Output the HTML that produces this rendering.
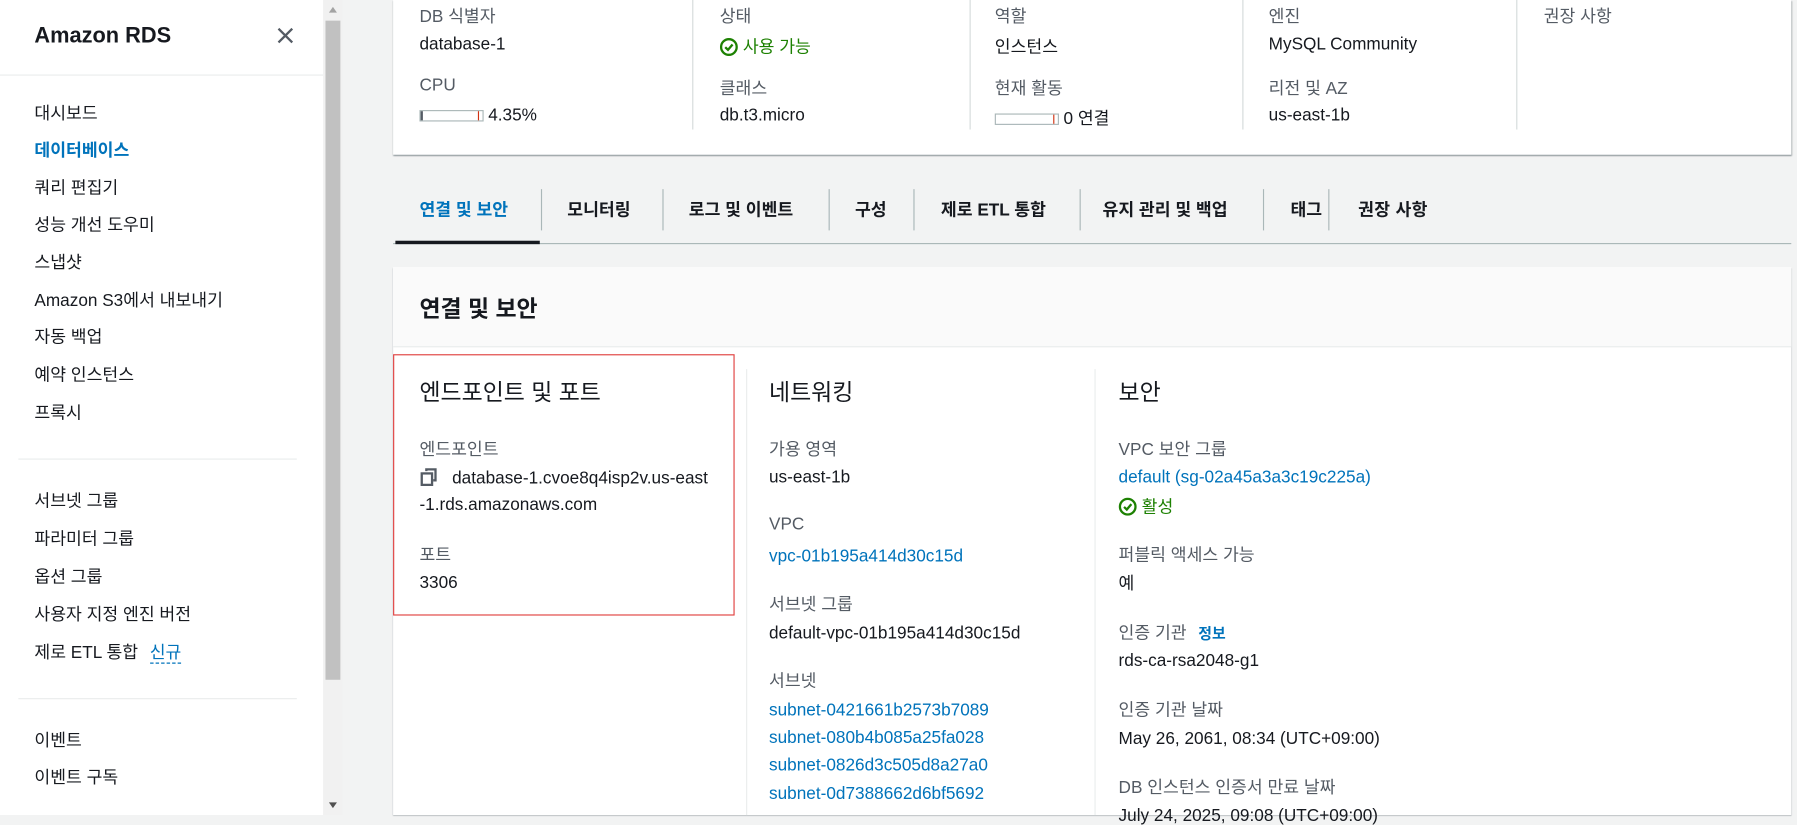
<!DOCTYPE html>
<html><head><meta charset="utf-8"><style>
html,body{margin:0;padding:0;width:1797px;height:815px;overflow:hidden;background:#f2f3f3}
#w{position:absolute;left:0;top:0;width:1568px;height:711px;transform:scale(1.14605,1.1463);transform-origin:0 0;font-family:"Liberation Sans","Noto Sans CJK KR",sans-serif;color:#16191f;font-size:15px}
.a{position:absolute;white-space:nowrap}
.g{color:#545b64}
.b{color:#0073bb}
.gr{color:#1d8102}
.hd{font-size:20px}
.tab{font-weight:bold;color:#16191f}
.vs{position:absolute;width:1px;background:#d5dbdb}
.bar{display:inline-block;width:54px;height:8px;border:1px solid #aab7b8;background:#fff;vertical-align:middle;position:relative;margin-right:4px}
</style></head><body><div id="w">
<div class="a" style="left:0;top:0;width:282px;height:711px;background:#fff"></div>
<div class="a" style="left:30px;top:21px;font-size:19px;font-weight:bold">Amazon RDS</div>
<svg class="a" style="left:241px;top:23px" width="16" height="16"><path d="M2 2L14 14M14 2L2 14" stroke="#545b64" stroke-width="2"/></svg>
<div class="a" style="left:0;top:65px;width:282px;height:1px;background:#eaeded"></div>
<div class="a" style="left:30px;top:88px">대시보드</div>
<div class="a b" style="left:30px;top:120px;font-weight:bold">데이터베이스</div>
<div class="a" style="left:30px;top:153px">쿼리 편집기</div>
<div class="a" style="left:30px;top:185px">성능 개선 도우미</div>
<div class="a" style="left:30px;top:218px">스냅샷</div>
<div class="a" style="left:30px;top:251px">Amazon S3에서 내보내기</div>
<div class="a" style="left:30px;top:283px">자동 백업</div>
<div class="a" style="left:30px;top:316px">예약 인스턴스</div>
<div class="a" style="left:30px;top:349px">프록시</div>
<div class="a" style="left:16px;top:400px;width:243px;height:1px;background:#eaeded"></div>
<div class="a" style="left:30px;top:426px">서브넷 그룹</div>
<div class="a" style="left:30px;top:459px">파라미터 그룹</div>
<div class="a" style="left:30px;top:492px">옵션 그룹</div>
<div class="a" style="left:30px;top:525px">사용자 지정 엔진 버전</div>
<div class="a" style="left:30px;top:558px">제로 ETL 통합 <span class="b" style="margin-left:6px;border-bottom:1px dashed #0073bb">신규</span></div>
<div class="a" style="left:16px;top:609px;width:243px;height:1px;background:#eaeded"></div>
<div class="a" style="left:30px;top:635px">이벤트</div>
<div class="a" style="left:30px;top:667px">이벤트 구독</div>
<div class="a" style="left:282px;top:0;width:17px;height:711px;background:#f1f1f1"></div>
<div class="a" style="left:284px;top:18px;width:13px;height:575px;background:#c1c1c1"></div>
<svg class="a" style="left:284px;top:3px" width="13" height="10"><path d="M3 8L6.5 3L10 8Z" fill="#a3a3a3"/></svg>
<svg class="a" style="left:284px;top:698px" width="13" height="10"><path d="M3 2L6.5 7L10 2Z" fill="#505050"/></svg>
<div class="a" style="left:343px;top:0;width:1220px;height:135px;background:#fff;box-shadow:0 1px 1px rgba(0,28,36,.3),1px 1px 1px rgba(0,28,36,.15)"></div>
<div class="vs" style="left:604px;top:0;height:113px"></div>
<div class="vs" style="left:846px;top:0;height:113px"></div>
<div class="vs" style="left:1084px;top:0;height:113px"></div>
<div class="vs" style="left:1323px;top:0;height:113px"></div>
<div class="a g" style="left:366px;top:3px">DB 식별자</div>
<div class="a" style="left:366px;top:30px">database-1</div>
<div class="a g" style="left:366px;top:66px">CPU</div>
<div class="a" style="left:366px;top:92px"><span class="bar"><i style="position:absolute;left:0;top:0;width:2px;height:8px;background:#545b64"></i><i style="position:absolute;left:50px;top:0;width:1px;height:8px;background:#d13212"></i></span>4.35%</div>
<div class="a g" style="left:628px;top:3px">상태</div>
<div class="a gr" style="left:628px;top:30px"><svg width="16" height="16" style="vertical-align:-3px"><circle cx="8" cy="8" r="6.8" fill="none" stroke="#1d8102" stroke-width="2"/><path d="M4.8 8.2L7.2 10.5L11.2 5.8" fill="none" stroke="#1d8102" stroke-width="2"/></svg> 사용 가능</div>
<div class="a g" style="left:628px;top:66px">클래스</div>
<div class="a" style="left:628px;top:92px">db.t3.micro</div>
<div class="a g" style="left:868px;top:3px">역할</div>
<div class="a" style="left:868px;top:30px">인스턴스</div>
<div class="a g" style="left:868px;top:66px">현재 활동</div>
<div class="a" style="left:868px;top:92px"><span class="bar"><i style="position:absolute;left:50px;top:0;width:1px;height:8px;background:#d13212"></i></span>0 연결</div>
<div class="a g" style="left:1107px;top:3px">엔진</div>
<div class="a" style="left:1107px;top:30px">MySQL Community</div>
<div class="a g" style="left:1107px;top:66px">리전 및 AZ</div>
<div class="a" style="left:1107px;top:92px">us-east-1b</div>
<div class="a g" style="left:1347px;top:3px">권장 사항</div>
<div class="a" style="left:343px;top:212px;width:1220px;height:1px;background:#aab7b8"></div>
<div class="a" style="left:345px;top:210px;width:126px;height:3px;background:#16191f"></div>
<div class="a tab b" style="left:366px;top:172px;color:#0073bb">연결 및 보안</div>
<div class="vs" style="left:472px;top:165px;height:36px;background:#aab7b8"></div>
<div class="a tab" style="left:495px;top:172px">모니터링</div>
<div class="vs" style="left:578px;top:165px;height:36px;background:#aab7b8"></div>
<div class="a tab" style="left:601px;top:172px">로그 및 이벤트</div>
<div class="vs" style="left:723px;top:165px;height:36px;background:#aab7b8"></div>
<div class="a tab" style="left:746px;top:172px">구성</div>
<div class="vs" style="left:797px;top:165px;height:36px;background:#aab7b8"></div>
<div class="a tab" style="left:821px;top:172px">제로 ETL 통합</div>
<div class="vs" style="left:942px;top:165px;height:36px;background:#aab7b8"></div>
<div class="a tab" style="left:962px;top:172px">유지 관리 및 백업</div>
<div class="vs" style="left:1102px;top:165px;height:36px;background:#aab7b8"></div>
<div class="a tab" style="left:1126px;top:172px">태그</div>
<div class="vs" style="left:1159px;top:165px;height:36px;background:#aab7b8"></div>
<div class="a tab" style="left:1185px;top:172px;letter-spacing:0.3px">권장 사항</div>
<div class="a" style="left:343px;top:233px;width:1220px;height:478px;background:#fff;box-shadow:0 1px 1px rgba(0,28,36,.3)"></div>
<div class="a" style="left:343px;top:233px;width:1220px;height:69px;background:#fafafa;border-bottom:1px solid #eaeded"></div>
<div class="a hd" style="left:366px;top:253px;font-weight:bold">연결 및 보안</div>
<div class="a" style="left:343px;top:309px;width:296px;height:226px;border:1px solid #e0403f"></div>
<div class="vs" style="left:651px;top:322px;height:389px;background:#eaeded"></div>
<div class="vs" style="left:955px;top:322px;height:389px;background:#eaeded"></div>
<div class="a hd" style="left:366px;top:326px">엔드포인트 및 포트</div>
<div class="a g" style="left:366px;top:381px">엔드포인트</div>
<div class="a" style="left:366px;top:408px"><svg width="16" height="16" style="vertical-align:-2px"><rect x="2" y="5" width="9" height="10" fill="none" stroke="#545b64" stroke-width="2"/><path d="M6 3V1.5H14V11H12" fill="none" stroke="#545b64" stroke-width="2"/></svg> &nbsp;&nbsp;database-1.cvoe8q4isp2v.us-east</div>
<div class="a" style="left:366px;top:432px">-1.rds.amazonaws.com</div>
<div class="a g" style="left:366px;top:473px">포트</div>
<div class="a" style="left:366px;top:500px">3306</div>
<div class="a hd" style="left:671px;top:326px">네트워킹</div>
<div class="a g" style="left:671px;top:381px">가용 영역</div>
<div class="a" style="left:671px;top:408px">us-east-1b</div>
<div class="a g" style="left:671px;top:449px">VPC</div>
<div class="a b" style="left:671px;top:477px">vpc-01b195a414d30c15d</div>
<div class="a g" style="left:671px;top:516px">서브넷 그룹</div>
<div class="a" style="left:671px;top:544px">default-vpc-01b195a414d30c15d</div>
<div class="a g" style="left:671px;top:583px">서브넷</div>
<div class="a b" style="left:671px;top:611px">subnet-0421661b2573b7089</div>
<div class="a b" style="left:671px;top:635px">subnet-080b4b085a25fa028</div>
<div class="a b" style="left:671px;top:659px">subnet-0826d3c505d8a27a0</div>
<div class="a b" style="left:671px;top:684px">subnet-0d7388662d6bf5692</div>
<div class="a hd" style="left:976px;top:326px">보안</div>
<div class="a g" style="left:976px;top:381px">VPC 보안 그룹</div>
<div class="a b" style="left:976px;top:408px">default (sg-02a45a3a3c19c225a)</div>
<div class="a gr" style="left:976px;top:431px"><svg width="16" height="16" style="vertical-align:-3px"><circle cx="8" cy="8" r="6.8" fill="none" stroke="#1d8102" stroke-width="2"/><path d="M4.8 8.2L7.2 10.5L11.2 5.8" fill="none" stroke="#1d8102" stroke-width="2"/></svg> 활성</div>
<div class="a g" style="left:976px;top:473px">퍼블릭 액세스 가능</div>
<div class="a" style="left:976px;top:498px">예</div>
<div class="a g" style="left:976px;top:541px">인증 기관 <span class="b" style="font-size:13px;font-weight:bold;margin-left:6px">정보</span></div>
<div class="a" style="left:976px;top:568px">rds-ca-rsa2048-g1</div>
<div class="a g" style="left:976px;top:608px">인증 기관 날짜</div>
<div class="a" style="left:976px;top:636px">May 26, 2061, 08:34 (UTC+09:00)</div>
<div class="a g" style="left:976px;top:676px">DB 인스턴스 인증서 만료 날짜</div>
<div class="a" style="left:976px;top:703px">July 24, 2025, 09:08 (UTC+09:00)</div>
</div></body></html>
